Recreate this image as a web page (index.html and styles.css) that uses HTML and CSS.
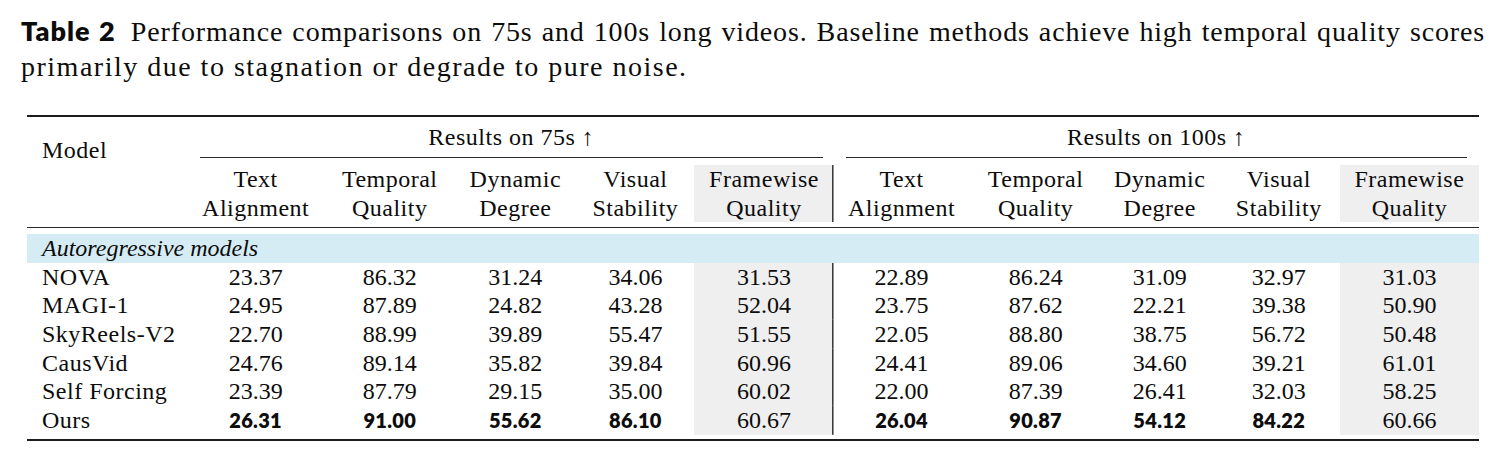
FILE: index.html
```html
<!DOCTYPE html>
<html lang="en">
<head>
    <meta charset="UTF-8">
    <meta name="viewport" content="width=device-width, initial-scale=1.0">
    <title>Table 2 - Long video results</title>
    <link rel="stylesheet" href="styles.css">
</head>
<body>

<div class="page">
    <p class="caption">
        <span class="line first"><span class="label">Table 2</span> Performance comparisons on 75s and 100s long videos. Baseline methods achieve high temporal quality scores</span>
        <span class="line second">primarily due to stagnation or degrade to pure noise.</span>
    </p>

    <table class="results">
        <colgroup>
            <col class="c-model">
            <col class="c1"><col class="c2"><col class="c3"><col class="c4"><col class="c5">
            <col class="c6"><col class="c7"><col class="c8"><col class="c9"><col class="c10">
        </colgroup>
        <thead>
            <tr class="group-row">
                <th rowspan="2" class="model-head">Model</th>
                <th colspan="5"><div class="group-title left">Results on 75s ↑</div></th>
                <th colspan="5"><div class="group-title right">Results on 100s ↑</div></th>
            </tr>
            <tr class="metric-row">
                <th>Text<br>Alignment</th>
                <th>Temporal<br>Quality</th>
                <th>Dynamic<br>Degree</th>
                <th>Visual<br>Stability</th>
                <th class="fw split">Framewise<br>Quality</th>
                <th>Text<br>Alignment</th>
                <th>Temporal<br>Quality</th>
                <th>Dynamic<br>Degree</th>
                <th>Visual<br>Stability</th>
                <th class="fw">Framewise<br>Quality</th>
            </tr>
        </thead>
        <tbody id="rows">
            <tr class="section"><td colspan="11"><span>Autoregressive models</span></td></tr>
        </tbody>
    </table>
</div>

<script>
    const rowsBody = document.getElementById('rows');

    // [name, 75s x5, 100s x5]; best values are marked with *
    const models = [
        ['NOVA', '23.37', '86.32', '31.24', '34.06', '31.53', '22.89', '86.24', '31.09', '32.97', '31.03'],
        ['MAGI-1', '24.95', '87.89', '24.82', '43.28', '52.04', '23.75', '87.62', '22.21', '39.38', '50.90'],
        ['SkyReels-V2', '22.70', '88.99', '39.89', '55.47', '51.55', '22.05', '88.80', '38.75', '56.72', '50.48'],
        ['CausVid', '24.76', '89.14', '35.82', '39.84', '60.96', '24.41', '89.06', '34.60', '39.21', '61.01'],
        ['Self Forcing', '23.39', '87.79', '29.15', '35.00', '60.02', '22.00', '87.39', '26.41', '32.03', '58.25'],
        ['Ours', '*26.31', '*91.00', '*55.62', '*86.10', '60.67', '*26.04', '*90.87', '*54.12', '*84.22', '60.66']
    ];

    models.forEach((row, i) => {
        const tr = document.createElement('tr');
        if (i === models.length - 1) tr.className = 'last';

        row.forEach((value, col) => {
            const td = document.createElement('td');
            if (col === 0) {
                td.className = 'name';
                td.textContent = value;
            } else {
                if (col === 5) td.className = 'fw split';
                if (col === 10) td.className = 'fw';
                if (value.startsWith('*')) {
                    td.innerHTML = `<b class="best">${value.slice(1)}</b>`;
                } else {
                    td.textContent = value;
                }
            }
            tr.appendChild(td);
        });

        rowsBody.appendChild(tr);
    });
</script>

</body>
</html>
```

FILE: styles.css
```css
body {
    margin: 0;
    background-color: #ffffff;
    color: #0c0c0c;
    font-family: 'Liberation Serif', 'Times New Roman', serif;
}
.page {
    padding: 14px 0 0 21px;
}
.caption {
    margin: 0;
    width: 1464px;
    font-size: 28px;
    line-height: 35px;
}
.caption .line {
    display: block;
    white-space: nowrap;
}
.caption .line.first {
    letter-spacing: 0.85px;
    text-align: justify;
    text-align-last: justify;
}
.caption .line.second {
    letter-spacing: 1.5px;
}
.caption .label {
    font-family: Lato, 'Liberation Sans', sans-serif;
    font-weight: 800;
    font-size: 27px;
    line-height: 1;
    letter-spacing: 1px;
    margin-right: 6px;
}
.results {
    margin: 31px 0 0 6px;
    width: 1452px;
    table-layout: fixed;
    border-collapse: separate;
    border-spacing: 0;
    font-size: 24px;
    letter-spacing: 0.5px;
}
.c-model { width: 159px; }
.c1 { width: 139px; }
.c2 { width: 129px; }
.c3 { width: 122px; }
.c4 { width: 118px; }
.c5 { width: 139px; }
.c6 { width: 136px; }
.c7 { width: 132px; }
.c8 { width: 116px; }
.c9 { width: 122px; }
.c10 { width: 139px; }
.results th, .results td {
    padding: 0;
    font-weight: normal;
    text-align: center;
    background-clip: content-box;
}

/* header */
.group-row th {
    border-top: 2px solid #1c1c1c;
    padding-top: 6px;
    vertical-align: top;
}
.group-title {
    line-height: 28px;
    padding-bottom: 6px;
    border-bottom: 1px solid #2a2a2a;
}
.group-title.left { margin: 0 11px 0 14px; }
.group-title.right { margin: 0 12px 0 12px; }
.model-head {
    text-align: left !important;
    padding: 20px 0 5px 15px !important;
    border-bottom: 1px solid #2a2a2a;
}
.metric-row th {
    line-height: 28.5px;
    padding: 7px 0 5px;
    border-bottom: 1px solid #2a2a2a;
}

/* shaded framewise column + the | rule */
.results .fw {
    background: #efefef content-box;
}
.results .split {
    background: linear-gradient(#3a3a3a, #3a3a3a) right / 1.5px 100% no-repeat content-box, #efefef content-box;
}

/* body */
.section td {
    padding-top: 6px;
    text-align: left;
    background: #d6ecf5 content-box;
    line-height: 29px;
}
.section span {
    padding-left: 15px;
    font-style: italic;
}
.results tbody td {
    line-height: 28.67px;
    letter-spacing: 0;
}
.results td.name {
    text-align: left;
    padding-left: 15px;
    letter-spacing: 0.5px;
}
.results tr.last td {
    padding-bottom: 4px;
    border-bottom: 2px solid #1c1c1c;
}
.best {
    font-family: Lato, 'Liberation Sans', sans-serif;
    font-weight: 800;
    font-size: 20px;
    letter-spacing: 0.3px;
}
```
